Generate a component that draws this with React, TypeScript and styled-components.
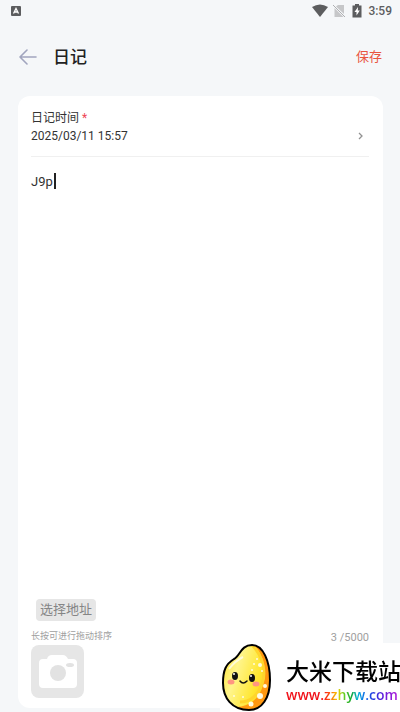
import React, { useState } from 'react';
import styled, { createGlobalStyle } from 'styled-components';

const GlobalStyle = createGlobalStyle`
  *, *::before, *::after { box-sizing: border-box; }
  html, body { margin: 0; }
  body {
    background: #f5f7f9;
    color: #333;
    font-family: Roboto, "Noto Sans CJK SC", sans-serif;
  }
  button, textarea { font: inherit; color: inherit; border: 0; padding: 0; background: none; }
`;

const Screen = styled.div`
  display: flex;
  flex-direction: column;
  min-height: 100vh;
  padding-bottom: 4px;
`;

const StatusBar = styled.div`
  display: flex;
  align-items: center;
  justify-content: space-between;
  height: 22px;
  padding: 0 8px 0 11px;
  color: #5c5d5f;
`;

const StatusIcons = styled.div`
  display: flex;
  align-items: center;
  gap: 5px;
`;

const Clock = styled.time`
  font-size: 12px;
  font-weight: 500;
  line-height: 16px;
`;

const Header = styled.header`
  display: flex;
  align-items: center;
  height: 70px;
  padding: 0 18px;
`;

const IconButton = styled.button`
  display: flex;
  align-items: center;
  justify-content: center;
  width: 20px;
  height: 24px;
  margin-right: 15px;
  cursor: pointer;
`;

const Title = styled.h1`
  flex: 1;
  margin: 0;
  font-size: 17px;
  font-weight: 500;
  line-height: 24px;
  color: #222;
`;

const SaveButton = styled.button`
  font-size: 13px;
  line-height: 20px;
  color: #e9553f;
  cursor: pointer;
`;

const Card = styled.main`
  display: flex;
  flex: 1;
  flex-direction: column;
  margin: 4px 17px 0 18px;
  padding: 13px 14px 10px 13px;
  border-radius: 12px;
  background: #fff;
`;

const DateRow = styled.button`
  display: flex;
  align-items: flex-end;
  justify-content: space-between;
  padding-bottom: 11px;
  border-bottom: 1px solid #f0f0f0;
  text-align: left;
  cursor: pointer;
`;

const DateText = styled.span`
  display: flex;
  flex-direction: column;
  font-size: 12px;
  line-height: 18px;
`;

const Required = styled.span`
  margin-left: 3px;
  color: #ee4655;
`;

const Chevron = styled.svg`
  margin: 0 4px 4px 0;
`;

const Editor = styled.div`
  position: relative;
  display: flex;
  flex: 1;
  margin-top: 15px;
`;

const EntryText = styled.textarea`
  flex: 1;
  min-width: 0;
  font-size: 13px;
  line-height: 20px;
  resize: none;
  outline: none;
  caret-color: transparent;
`;

const CaretLayer = styled.div`
  position: absolute;
  inset: 0;
  font-size: 13px;
  line-height: 20px;
  color: transparent;
  white-space: pre-wrap;
  pointer-events: none;

  &::after {
    content: "";
    display: inline-block;
    width: 2px;
    height: 16px;
    margin-left: 1px;
    background: #222;
    vertical-align: -3px;
  }
`;

const AddressButton = styled.button`
  align-self: flex-start;
  height: 22px;
  margin: 8px 0 6px 5px;
  padding: 0 4px;
  border-radius: 4px;
  background: #e6e6e6;
  font-size: 13px;
  line-height: 22px;
  color: #858585;
  cursor: pointer;
`;

const Hints = styled.div`
  display: flex;
  justify-content: space-between;
  line-height: 18px;
  color: #a0a0a0;
`;

const SortHint = styled.span`
  font-size: 9px;
`;

const Counter = styled.span`
  padding-top: 4px;
  font-size: 11px;
  line-height: 14px;
`;

const PhotoButton = styled.button`
  display: flex;
  align-self: flex-start;
  align-items: center;
  justify-content: center;
  width: 53px;
  height: 53px;
  border-radius: 8px;
  background: #e6e6e6;
  cursor: pointer;
`;

const SiteBadge = styled.aside`
  position: fixed;
  right: 0;
  bottom: 0;
  display: flex;
  width: 180px;
  height: 69px;
  background: #fff;
`;

const EggDrawing = styled.svg`
  flex: none;
`;

const SiteText = styled.div`
  display: flex;
  flex-direction: column;
  margin-left: 14px;
  padding-top: 12px;
  white-space: nowrap;
`;

const SiteName = styled.strong`
  font-family: "Noto Sans CJK SC", sans-serif;
  font-size: 23px;
  font-weight: 500;
  line-height: 30px;
  color: #000;
`;

const SiteLink = styled.a`
  align-self: flex-start;
  font-family: "Open Sans", sans-serif;
  font-size: 14px;
  font-weight: 600;
  line-height: 20px;
  text-decoration: none;
  color: transparent;
  background: linear-gradient(90deg, #f01018 0 33%, #ff4a12 38%, #f5d000 46%, #64cf25 52%, #16a82d 58%, #00b0d8 64%, #1265ea 71%, #2934dd 79%, #7a1bdc 90%, #b01bd8 100%);
  background-clip: text;
`;

const Egg = () => (
  <EggDrawing width="52" height="69" viewBox="0 0 52 69" aria-hidden="true">
    <defs>
      <linearGradient id="egg" x1="0" y1="0.3" x2="1" y2="0.7">
        <stop offset="0" stopColor="#ffe63a" />
        <stop offset="0.3" stopColor="#fff58c" />
        <stop offset="0.7" stopColor="#ffe62f" />
        <stop offset="1" stopColor="#ffc51a" />
      </linearGradient>
      <clipPath id="shell">
        <path d="M32 2C43 2 50 18 50 37C50 55 42 67 29 67C12 67 3 55 3 40C3 27 6 21 14 16C20 13 21 2 32 2Z" />
      </clipPath>
    </defs>
    <g clipPath="url(#shell)">
      <path d="M0 0H52V69H0Z" fill="url(#egg)" />
      <path d="M32 1C45 11 47 29 43 42C39 57 29 63 17 64L28 69H52V2Z" fill="#ff9811" />
      <path d="M32 2C44 14 46 31 42 41C37 54 29 59 20 59" fill="none" stroke="#ffd52c" strokeWidth="3" />
      <path d="M9 26Q15 18 23 14" fill="none" stroke="#fff" strokeWidth="2" opacity=".7" />
      <g fill="#fffbe0">
        <circle cx="37" cy="16" r="1" /><circle cx="34" cy="21" r="1" />
        <circle cx="40" cy="22" r="2" /><circle cx="32" cy="27" r="1" />
        <circle cx="42" cy="28" r="1" /><circle cx="45" cy="43" r="2" />
        <circle cx="40" cy="53" r="3" /><circle cx="31" cy="61" r="2.5" />
        <circle cx="14" cy="53" r="1" /><circle cx="23" cy="54" r="1" />
      </g>
    </g>
    <path d="M32 2C43 2 50 18 50 37C50 55 42 67 29 67C12 67 3 55 3 40C3 27 6 21 14 16C20 13 21 2 32 2Z" fill="none" stroke="#000" strokeWidth="2" />
    <ellipse cx="15" cy="33" rx="3" ry="4" fill="#111" /><ellipse cx="32" cy="35" rx="3" ry="4" fill="#111" />
    <circle cx="14" cy="31" r="1" fill="#fff" /><circle cx="31" cy="33" r="1" fill="#fff" />
    <path d="M20 38Q23 42 27 38" fill="none" stroke="#111" strokeWidth="1.5" strokeLinecap="round" />
    <ellipse cx="11" cy="39" rx="3.5" ry="2.5" fill="#ff9681" /><ellipse cx="36" cy="41" rx="3.5" ry="2.5" fill="#ff9681" />
  </EggDrawing>
);

export default function App() {
  const [entry, setEntry] = useState('J9p');

  return (
    <>
      <GlobalStyle />
      <Screen>
        <StatusBar>
          <svg width="10" height="10" viewBox="0 0 10 10" aria-hidden="true">
            <rect width="10" height="10" rx="1" fill="#5c5d5f" />
            <path d="M2.5 7.5L5 2.5L7.5 7.5M3.5 6H6.5" fill="none" stroke="#fff" strokeWidth="1.3" />
          </svg>
          <StatusIcons>
            <svg width="16" height="14" viewBox="0 0 16 14" aria-hidden="true">
              <path d="M0 3Q8-2 16 3L8 13Z" fill="currentColor" />
            </svg>
            <svg width="13" height="14" viewBox="0 0 13 14" aria-hidden="true">
              <path d="M5 1H11V10L3 2.500ZM1.500 4V13H10.500Z" fill="#c6c7c9" />
              <path d="M0 1L12 13" stroke="#aeb0b2" strokeWidth="1" />
            </svg>
            <svg width="12" height="14" viewBox="0 0 12 14" aria-hidden="true">
              <path d="M4 0H8V1.500H10.500V13.500H1.500V1.500H4Z" fill="currentColor" />
              <path d="M7 3L3.500 8H5.500V11.500L8.800 6.500H6.800Z" fill="#fff" />
            </svg>
            <Clock>3:59</Clock>
          </StatusIcons>
        </StatusBar>
        <Header>
          <IconButton aria-label="返回">
            <svg width="18" height="16" viewBox="0 0 18 16" aria-hidden="true">
              <path d="M17 8H1M8 1L1 8L8 15" fill="none" stroke="#a1a5be" strokeWidth="1.6" strokeLinecap="round" strokeLinejoin="round" />
            </svg>
          </IconButton>
          <Title>日记</Title>
          <SaveButton>保存</SaveButton>
        </Header>
        <Card>
          <DateRow>
            <DateText>
              <span>日记时间<Required>*</Required></span>
              <span>2025/03/11 15:57</span>
            </DateText>
            <Chevron width="8" height="10" viewBox="0 0 8 10" aria-hidden="true">
              <path d="M2 2L5 5L2 8" fill="none" stroke="#929292" strokeWidth="1.3" />
            </Chevron>
          </DateRow>
          <Editor>
            <EntryText aria-label="日记内容" maxLength={5000} value={entry} onChange={(e) => setEntry(e.target.value)} />
            <CaretLayer aria-hidden="true">{entry}</CaretLayer>
          </Editor>
          <AddressButton>选择地址</AddressButton>
          <Hints>
            <SortHint>长按可进行拖动排序</SortHint>
            <Counter>{entry.length} /5000</Counter>
          </Hints>
          <PhotoButton aria-label="添加照片">
            <svg width="40" height="36" viewBox="0 0 40 36" aria-hidden="true">
              <path d="M5 5H9Q10 1 14 1H25Q28 1 30 5H35Q39 5 39 9V30Q39 34 35 34H5Q1 34 1 30V9Q1 5 5 5Z" fill="#fff" />
              <circle cx="20" cy="19" r="8" fill="#e2e2e2" />
              <ellipse cx="32" cy="11" rx="4" ry="2" fill="#e2e2e2" />
            </svg>
          </PhotoButton>
        </Card>
      </Screen>
      <SiteBadge>
        <Egg />
        <SiteText>
          <SiteName>大米下载站</SiteName>
          <SiteLink href="#">www.zzhyw.com</SiteLink>
        </SiteText>
      </SiteBadge>
    </>
  );
}
